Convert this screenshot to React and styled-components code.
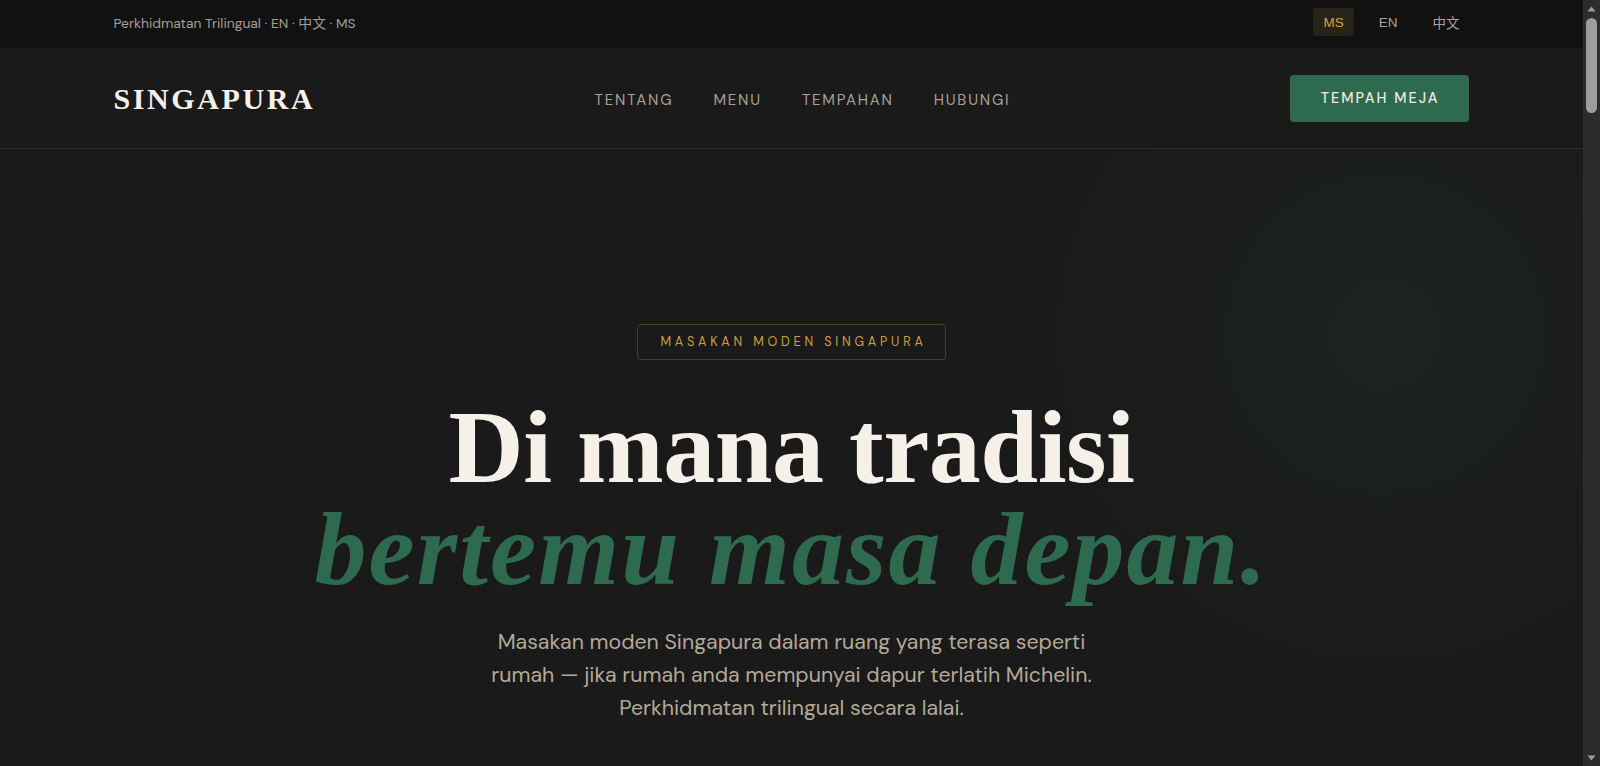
import React from "react";
import styled, { createGlobalStyle } from "styled-components";

const GlobalStyle = createGlobalStyle`
  html { color-scheme: dark; background: #1a1a1a; }
  * { box-sizing: border-box; }
  body {
    margin: 0;
    overflow: hidden;
    background: #1a1a1a;
    color: #f5f0e8;
    font-family: "DM Sans", Inter, "Noto Sans CJK SC", sans-serif;
    -webkit-font-smoothing: antialiased;
  }
`;

const Frame = styled.div`
  display: flex;
  height: 100vh;
`;

const Shell = styled.div`
  flex: 1;
  min-width: 0;
  height: 100%;
  overflow-y: scroll;
  scrollbar-width: none;
  background: #1a1a1a;
  &::-webkit-scrollbar { display: none; }
`;

const Rail = styled.div`
  width: 17px;
  flex: none;
  display: flex;
  flex-direction: column;
  background: #2c2c2c;
`;

const RailArrow = styled.div`
  height: 17px;
  flex: none;
  display: flex;
  align-items: center;
  justify-content: center;
`;

const RailTrack = styled.div`
  flex: 1;
  padding: 1px 3px 0 3px;
`;

const RailThumb = styled.div`
  height: 95px;
  border-radius: 6px;
  background: #9d9d9d;
`;

const Container = styled.div`
  max-width: 1356px;
  margin: 0 auto;
  height: 100%;
  display: flex;
  align-items: center;
  justify-content: space-between;
`;

const TopBar = styled.div`
  height: 48px;
  padding-bottom: 4px;
  background: #111111;
`;

const TopNote = styled.span`
  font-size: 13.8px;
  color: #a69e91;
`;

const LangGroup = styled.div`
  display: flex;
  align-items: center;
  gap: 15px;
`;

const LangButton = styled.button`
  border: 0;
  border-radius: 3px;
  padding: 0 10px;
  height: 28px;
  font-family: "Liberation Sans", Arial, "Noto Sans CJK SC", sans-serif;
  font-size: 13.5px;
  cursor: pointer;
  background: ${(p) => (p.$active ? "#27231a" : "transparent")};
  color: ${(p) => (p.$active ? "#d1a53c" : "#a8a39b")};
`;

const NavBar = styled.header`
  height: 101px;
  background: #1a1a1a;
  border-bottom: 1px solid #2a2a2a;
`;

const Logo = styled.a`
  font-family: "Liberation Serif", "Times New Roman", serif;
  font-weight: 700;
  font-size: 30px;
  letter-spacing: 2.6px;
  color: #f5f0e8;
  text-decoration: none;
  padding-top: 2px;
`;

const NavLinks = styled.nav`
  display: flex;
  gap: 40px;
  padding-top: 3px;
`;

const NavLink = styled.a`
  font-size: 15px;
  letter-spacing: 1.8px;
  text-transform: uppercase;
  color: #a8a196;
  text-decoration: none;
`;

const PrimaryButton = styled.a`
  display: inline-flex;
  align-items: center;
  justify-content: center;
  height: 47px;
  padding: 0 30px 0 31px;
  background: #2d6a4f;
  color: #efeadf;
  border-radius: 4px;
  font-size: 14.4px;
  font-weight: 500;
  letter-spacing: 2px;
  text-transform: uppercase;
  text-decoration: none;
`;

const GhostButton = styled(PrimaryButton)`
  background: transparent;
  border: 1px solid #3a3a3a;
  color: #d8d2c6;
`;

const Hero = styled.section`
  position: relative;
  overflow: hidden;
  background:
    radial-gradient(circle 330px at 87.5% 185px, rgba(45, 106, 79, 0.11), rgba(45, 106, 79, 0) 100%),
    #1a1a1a;
  padding: 175px 24px 180px;
  display: flex;
  flex-direction: column;
  align-items: center;
  text-align: center;
`;

const Badge = styled.span`
  display: inline-flex;
  align-items: center;
  height: 36px;
  padding: 0 18px 0 22px;
  border: 1px solid rgba(201, 160, 58, 0.28);
  border-radius: 4px;
  font-size: 12.6px;
  letter-spacing: 3.8px;
  color: #c9a03a;
  text-transform: uppercase;
`;

const Heading = styled.h1`
  margin: 36px 0 0;
  font-family: "Liberation Serif", "Times New Roman", serif;
  font-weight: 700;
  font-size: 104px;
  line-height: 102px;
  letter-spacing: -0.5px;
  color: #f5f0e8;
`;

const Accent = styled.em`
  display: block;
  font-style: italic;
  letter-spacing: 2px;
  color: #2d6a4f;
`;

const Lead = styled.p`
  margin: 26px 0 0;
  max-width: 620px;
  font-size: 21.3px;
  line-height: 33px;
  color: #b3a999;
`;

const CtaRow = styled.div`
  margin-top: 48px;
  display: flex;
  gap: 16px;
`;

const Section = styled.section`
  min-height: ${(p) => p.$h}px;
  padding: 120px 24px;
  border-top: 1px solid #242424;
  background: ${(p) => (p.$alt ? "#161616" : "#1a1a1a")};
`;

const SectionInner = styled.div`
  max-width: 1356px;
  margin: 0 auto;
`;

const Eyebrow = styled.div`
  font-size: 12.5px;
  letter-spacing: 3.4px;
  color: #c9a03a;
  text-transform: uppercase;
`;

const SectionTitle = styled.h2`
  margin: 16px 0 24px;
  font-family: "Liberation Serif", "Times New Roman", serif;
  font-size: 56px;
  font-weight: 700;
  color: #f5f0e8;
`;

const SectionText = styled.p`
  max-width: 640px;
  font-size: 18px;
  line-height: 30px;
  color: #b5ab9b;
`;

const Footer = styled.footer`
  height: 120px;
  background: #111111;
  color: #7d776d;
  font-size: 13px;
`;

const Arrow = ({ up }) => (
  <svg width="9" height="6" viewBox="0 0 9 6">
    <polygon points={up ? "4.5,0.5 8.5,5.5 0.5,5.5" : "0.5,0.5 8.5,0.5 4.5,5.5"} fill="#9d9d9d" />
  </svg>
);

const sections = [
  { id: "tentang", eyebrow: "Tentang", title: "Kisah kami", h: 1300, text: "Resipi keluarga, teknik moden, dan bahan tempatan terbaik." },
  { id: "menu", eyebrow: "Menu", title: "Menu musim ini", h: 1500, text: "Hidangan yang berubah mengikut musim dan pasar.", alt: true },
  { id: "tempahan", eyebrow: "Tempahan", title: "Tempah meja anda", h: 1100, text: "Tempahan dibuka 30 hari lebih awal." },
  { id: "hubungi", eyebrow: "Hubungi", title: "Cari kami", h: 700, text: "Kami sedia membantu dalam tiga bahasa.", alt: true },
];

export default function App() {
  return (
    <>
      <GlobalStyle />
      <Frame>
        <Shell>
          <TopBar>
            <Container>
              <TopNote>Perkhidmatan Trilingual · EN · 中文 · MS</TopNote>
              <LangGroup>
                <LangButton $active>MS</LangButton>
                <LangButton>EN</LangButton>
                <LangButton>中文</LangButton>
              </LangGroup>
            </Container>
          </TopBar>
          <NavBar>
            <Container>
              <Logo href="#">SINGAPURA</Logo>
              <NavLinks>
                <NavLink href="#tentang">Tentang</NavLink>
                <NavLink href="#menu">Menu</NavLink>
                <NavLink href="#tempahan">Tempahan</NavLink>
                <NavLink href="#hubungi">Hubungi</NavLink>
              </NavLinks>
              <PrimaryButton href="#tempahan">Tempah Meja</PrimaryButton>
            </Container>
          </NavBar>
          <Hero>
            <Badge>Masakan Moden Singapura</Badge>
            <Heading>
              Di mana tradisi
              <Accent>bertemu masa depan.</Accent>
            </Heading>
            <Lead>
              Masakan moden Singapura dalam ruang yang terasa seperti rumah — jika rumah anda mempunyai dapur terlatih Michelin. Perkhidmatan trilingual secara lalai.
            </Lead>
            <CtaRow>
              <PrimaryButton href="#tempahan">Tempah Meja</PrimaryButton>
              <GhostButton href="#menu">Lihat Menu</GhostButton>
            </CtaRow>
          </Hero>
          {sections.map((s) => (
            <Section key={s.id} id={s.id} $h={s.h} $alt={s.alt}>
              <SectionInner>
                <Eyebrow>{s.eyebrow}</Eyebrow>
                <SectionTitle>{s.title}</SectionTitle>
                <SectionText>{s.text}</SectionText>
              </SectionInner>
            </Section>
          ))}
          <Footer>
            <Container>
              <span>© Singapura</span>
              <span>Perkhidmatan Trilingual · EN · 中文 · MS</span>
            </Container>
          </Footer>
        </Shell>
        <Rail aria-hidden="true">
          <RailArrow><Arrow up /></RailArrow>
          <RailTrack><RailThumb /></RailTrack>
          <RailArrow><Arrow /></RailArrow>
        </Rail>
      </Frame>
    </>
  );
}
